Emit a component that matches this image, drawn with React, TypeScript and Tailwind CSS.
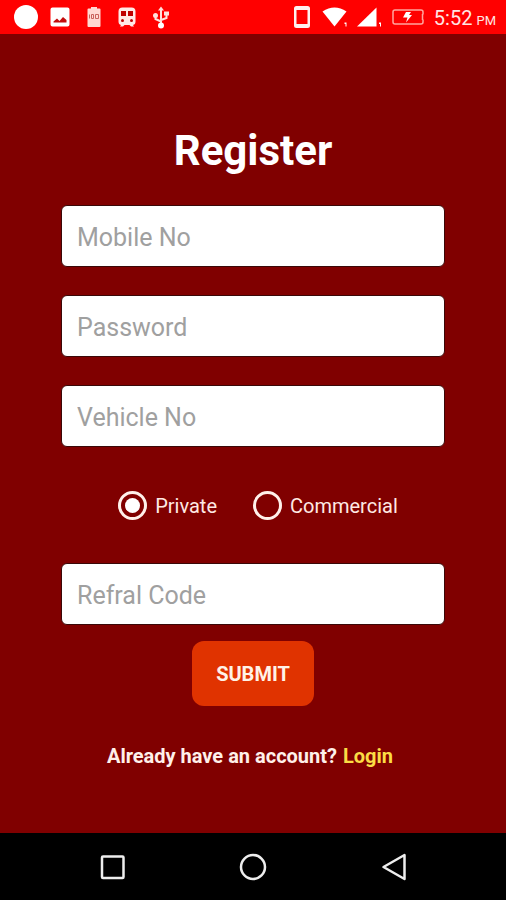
import { useState } from "react";

const StatusBar = () => (
    <header className="flex h-[34px] items-center justify-between bg-[#ff0000] pr-2.5 pl-3 text-white">
        <div className="flex items-center">
            <svg className="h-6 w-7" viewBox="0 0 28 24" fill="currentColor">
                <circle cx="14" cy="12" r="12" />
            </svg>
            <svg className="ml-2.5 h-5 w-5" viewBox="0 0 20 20" fill="currentColor">
                <path d="M2.5 0.5h15a2 2 0 0 1 2 2v15a2 2 0 0 1-2 2h-15a2 2 0 0 1-2-2v-15a2 2 0 0 1 2-2z" />
                <path fill="#c40d0d" d="M3.5 15.5h13V13L13 10l-3.5 4L7 11.5l-3.5 3z" />
            </svg>
            <svg className="ml-4 h-5 w-4" viewBox="0 0 16 20">
                <path fill="#ffd9d2" d="M5 0h6v1.500h2.500a1 1 0 0 1 1 1v16.500a1 1 0 0 1-1 1h-11a1 1 0 0 1-1-1V2.500a1 1 0 0 1 1-1H5z" />
                <path fill="none" stroke="#c9635c" strokeWidth="1" d="M3.500 7.500v4M5.500 7.500h2v4h-2zM9.500 7.500h3v4h-3z" />
            </svg>
            <svg className="ml-4 h-5 w-[18px]" viewBox="0 0 18 20">
                <path fill="#ffe9e6" d="M4.500 0.500h9q4 0 4 4v10q0 3-2.500 3.500l1 1.500h-3l-1.500-1.500h-5L5 19.500H2L3 18q-2.500-.5-2.500-3.500v-10q0-4 4-4z" />
                <path fill="#c00000" d="M3 4h5v5H3zM10 4h5v5h-5z" />
                <circle cx="4.500" cy="13.500" r="1.500" fill="#c00000" />
                <circle cx="13.500" cy="13.500" r="1.500" fill="#c00000" />
            </svg>
            <svg className="ml-4 h-6 w-[18px]" viewBox="0 0 18 24" fill="none" stroke="#ffe0dc" strokeWidth="2">
                <path d="M9 4v16M9 16.500L3.500 14V10M9 15l5.500-2V9" />
                <path fill="#ffe0dc" stroke="none" d="M9 1.500l3 4H6zM12 6.500h5v4h-5z" />
                <circle cx="3.500" cy="10.500" r="2.500" fill="#ffe0dc" stroke="none" />
                <circle cx="9" cy="20.500" r="3" fill="#ffffff" stroke="none" />
            </svg>
        </div>
        <div className="flex items-center">
            <svg className="h-[22px] w-4" viewBox="0 0 16 22" fill="#fff0ee">
                <path fillRule="evenodd" d="M2.500 0h11A2.500 2.500 0 0 1 16 2.500v17a2.500 2.500 0 0 1-2.500 2.500h-11A2.500 2.500 0 0 1 0 19.500v-17A2.500 2.500 0 0 1 2.500 0zM2.500 4v14h11V4z" />
            </svg>
            <svg className="ml-3 h-5 w-[26px]" viewBox="0 0 26 20" fill="currentColor">
                <path d="M0.500 4.500Q12.500-3.500 24.500 4.500L12.500 19.500z" />
                <path d="M22.500 15.500h2v4h-1v-2.500h-1z" />
            </svg>
            <svg className="ml-2 h-5 w-[26px]" viewBox="0 0 26 20" fill="currentColor">
                <path d="M1 19.500L20.500 0.500v19z" />
                <path d="M23 15.500h2v4h-1v-2.500h-1z" />
            </svg>
            <svg className="ml-2.5 h-4 w-8" viewBox="0 0 32 16" fill="none" stroke="#ffa69f" strokeWidth="1.500">
                <path d="M3 1h26a2 2 0 0 1 2 2v2.500M31 10.500V13a2 2 0 0 1-2 2H3a2 2 0 0 1-2-2V3a2 2 0 0 1 2-2M30.500 5v6" />
                <path fill="#ffffff" stroke="none" d="M14 3h5l-2 3h3l-6 7.500 1.500-5H11z" />
            </svg>
            <p className="ml-2.5 flex items-baseline pt-1 text-[#ffe6e3]">
                <span className="text-xl leading-6">5:52</span>
                <span className="ml-1 text-[13px] leading-6">PM</span>
            </p>
        </div>
    </header>
);

const Field = ({ id, label, type = "text" }: { id: string; label: string; type?: string }) => (
    <input
        id={id}
        name={id}
        type={type}
        aria-label={label}
        placeholder={label}
        className="h-[62px] w-full rounded-md border border-[#3a0808] bg-white px-[15px] pt-0.5 text-[25px] text-black outline-none placeholder:text-[#a0a0a0]"
    />
);

const VehicleType = ({ label, checked, onSelect }: { label: string; checked: boolean; onSelect: () => void }) => (
    <label className="flex items-center gap-2 text-xl text-[#ffe9e4]">
        <input
            type="radio"
            name="vehicleType"
            checked={checked}
            onChange={onSelect}
            className="grid h-[29px] w-[29px] appearance-none place-items-center rounded-full border-3 border-[#fff0ea] before:h-[15px] before:w-[15px] before:rounded-full checked:before:bg-white"
        />
        {label}
    </label>
);

const NavBar = () => (
    <nav className="flex h-[67px] items-center justify-between bg-black px-[98px] text-[#eeeeee]">
        <button type="button" aria-label="Recent apps">
            <svg className="h-7 w-7" viewBox="0 0 28 28" fill="none" stroke="currentColor" strokeWidth="2.500">
                <rect x="4" y="3.500" width="21.500" height="21.500" rx="1" />
            </svg>
        </button>
        <button type="button" aria-label="Home">
            <svg className="h-7 w-7" viewBox="0 0 28 28" fill="none" stroke="currentColor" strokeWidth="2.500">
                <circle cx="14" cy="14" r="12" />
            </svg>
        </button>
        <button type="button" aria-label="Back">
            <svg className="h-7 w-7" viewBox="0 0 28 28" fill="none" stroke="currentColor" strokeWidth="2.500" strokeLinejoin="round">
                <path d="M24.500 2v24L3.500 14z" />
            </svg>
        </button>
    </nav>
);

const App = () => {
    const [vehicleType, setVehicleType] = useState("Private");

    return (
        <div className="flex min-h-screen flex-col bg-[#800000] font-['Roboto',sans-serif]">
            <StatusBar />
            <main className="flex-1 px-[61px] pt-[93px]">
                <h1 className="text-center text-[42px] leading-12 font-bold text-white">Register</h1>
                <form className="mt-[30px] flex flex-col" onSubmit={(e) => e.preventDefault()}>
                    <div className="flex flex-col gap-7">
                        <Field id="mobile" label="Mobile No" type="tel" />
                        <Field id="password" label="Password" type="password" />
                        <Field id="vehicle" label="Vehicle No" />
                    </div>
                    <div className="flex h-[116px] items-center justify-center gap-9 pt-px pl-2.5">
                        {["Private", "Commercial"].map((type) => (
                            <VehicleType
                                key={type}
                                label={type}
                                checked={vehicleType === type}
                                onSelect={() => setVehicleType(type)}
                            />
                        ))}
                    </div>
                    <Field id="referral" label="Refral Code" />
                    <button
                        type="submit"
                        className="mt-4 h-[65px] self-center rounded-xl bg-[#e03300] px-6 text-xl font-bold text-[#fff3e8]"
                    >
                        SUBMIT
                    </button>
                </form>
                <p className="mt-9 text-center text-xl leading-7 font-bold text-[#fff0ea]">
                    Already have an account?
                    <a href="#login" className="px-1.5 text-[#fbdc45]">Login</a>
                </p>
            </main>
            <NavBar />
        </div>
    );
};

export default App;
